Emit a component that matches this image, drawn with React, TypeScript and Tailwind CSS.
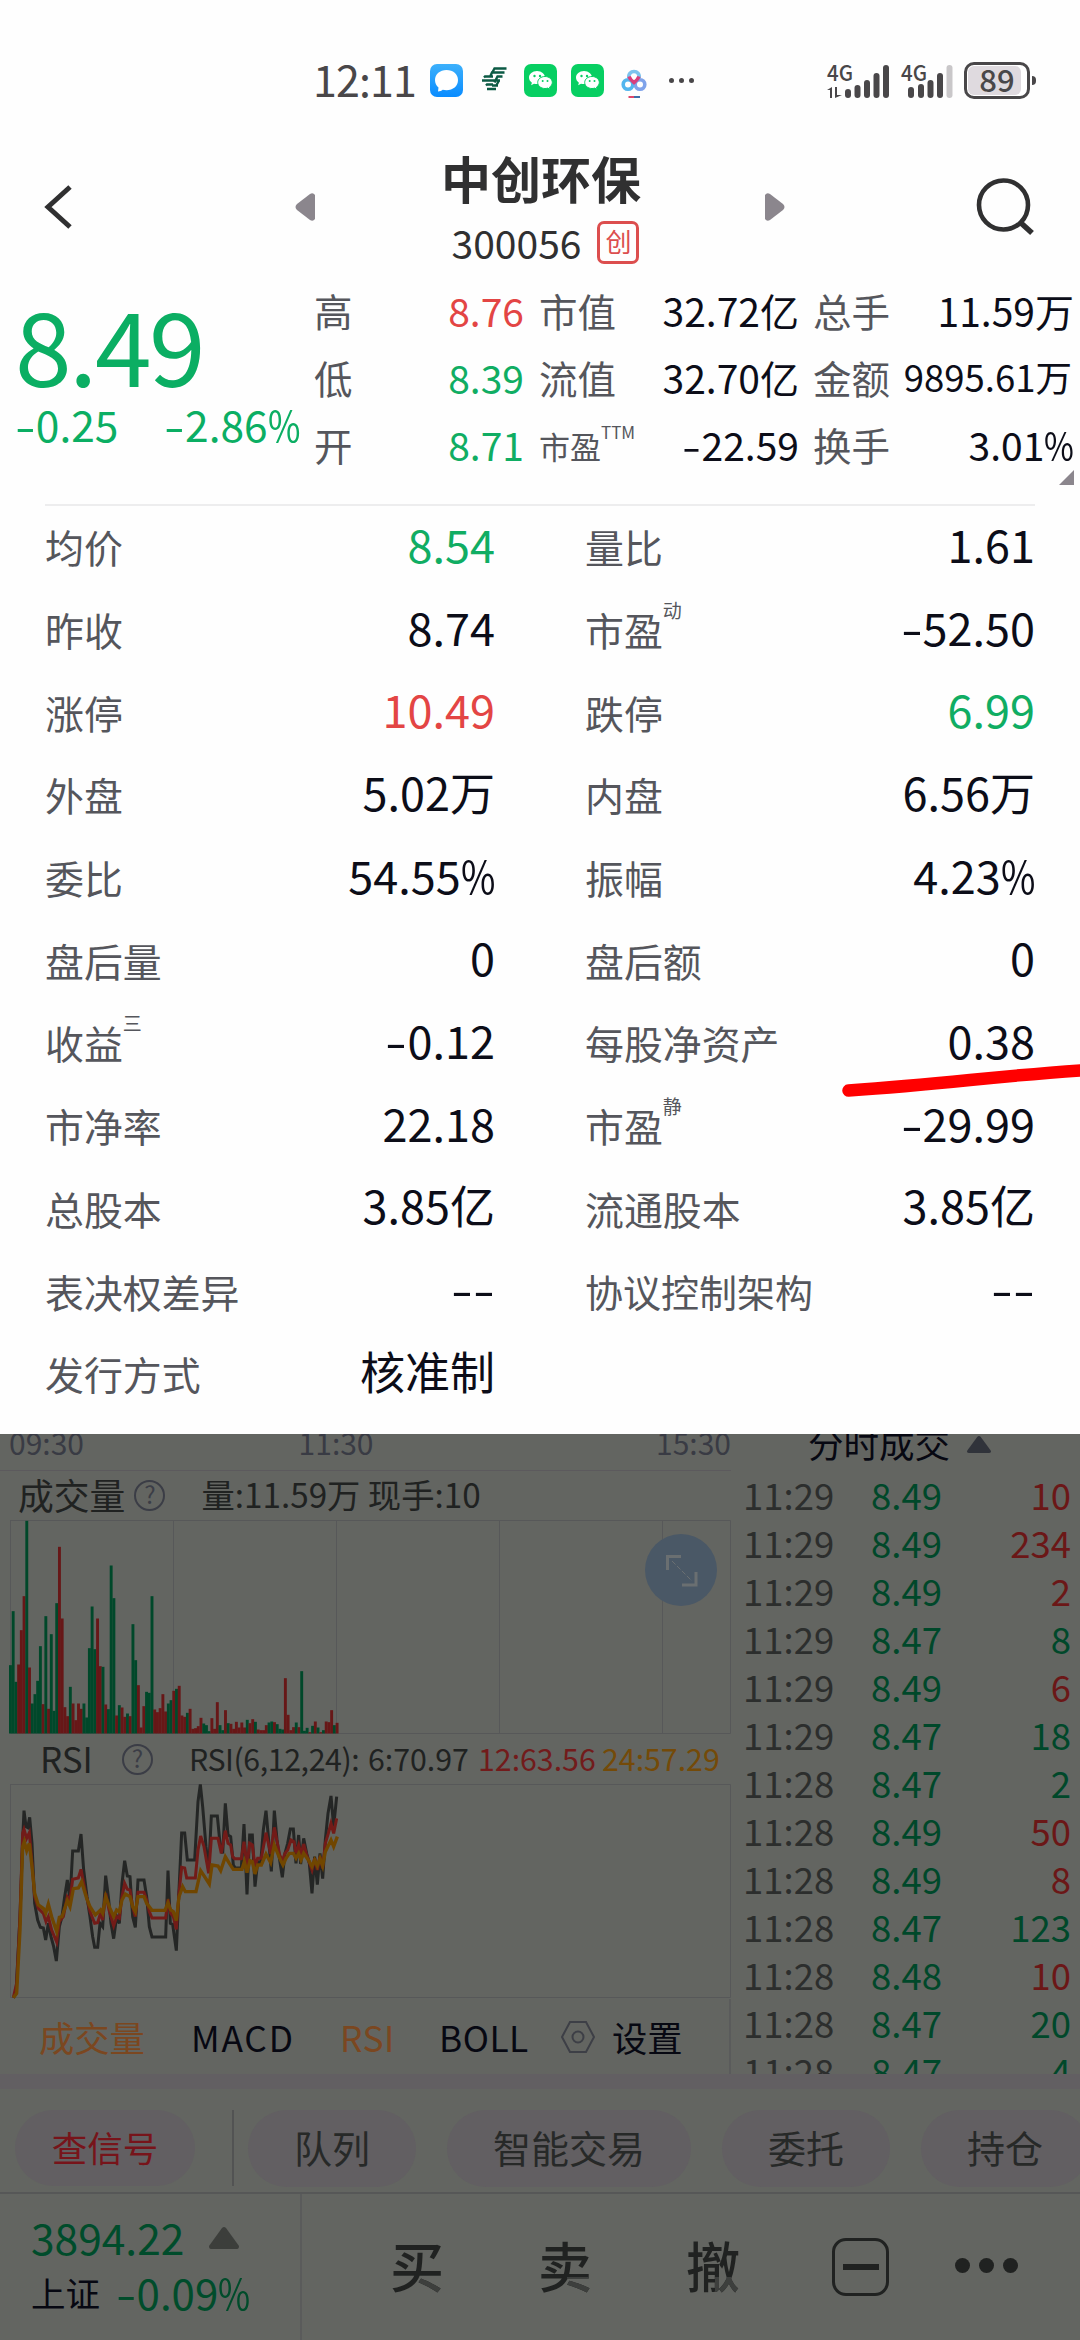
import type { ReactNode } from "react";
import { clsx } from "clsx";

type Tone = "up" | "down" | "ink";

const toneClass: Record<Tone, string> = {
  up: "text-[#e34544]",
  down: "text-[#10ad63]",
  ink: "text-[#0c0d18]",
};

type Cell = { label: string; sup?: string; value: string; tone?: Tone };

const details: Cell[] = [
  { label: "均价", value: "8.54", tone: "down" },
  { label: "量比", value: "1.61" },
  { label: "昨收", value: "8.74" },
  { label: "市盈", sup: "动", value: "-52.50" },
  { label: "涨停", value: "10.49", tone: "up" },
  { label: "跌停", value: "6.99", tone: "down" },
  { label: "外盘", value: "5.02万" },
  { label: "内盘", value: "6.56万" },
  { label: "委比", value: "54.55%" },
  { label: "振幅", value: "4.23%" },
  { label: "盘后量", value: "0" },
  { label: "盘后额", value: "0" },
  { label: "收益", sup: "三", value: "-0.12" },
  { label: "每股净资产", value: "0.38" },
  { label: "市净率", value: "22.18" },
  { label: "市盈", sup: "静", value: "-29.99" },
  { label: "总股本", value: "3.85亿" },
  { label: "流通股本", value: "3.85亿" },
  { label: "表决权差异", value: "--" },
  { label: "协议控制架构", value: "--" },
  { label: "发行方式", value: "核准制" },
];

const trades: [string, string, string, Tone][] = [
  ["11:29", "8.49", "10", "up"],
  ["11:29", "8.49", "234", "up"],
  ["11:29", "8.49", "2", "up"],
  ["11:29", "8.47", "8", "down"],
  ["11:29", "8.49", "6", "up"],
  ["11:29", "8.47", "18", "down"],
  ["11:28", "8.47", "2", "down"],
  ["11:28", "8.49", "50", "up"],
  ["11:28", "8.49", "8", "up"],
  ["11:28", "8.47", "123", "down"],
  ["11:28", "8.48", "10", "up"],
  ["11:28", "8.47", "20", "down"],
  ["11:28", "8.47", "4", "down"],
];

// one entry per minute, g = falling, r = rising
const volume =
  "g205 g367 g155 r207 r310 r412 g638 r198 g90 g118 g158 g262 r88 g352 r74 g298 g68 g391 r560 r345 r79 r52 g140 r90 r40 r90 r74 g90 g48 g256 g381 g253 r345 r202 g200 r87 g73 g504 g406 r54 g85 r78 r50 g60 r52 g328 g220 r145 r18 r82 g125 g122 g412 r72 r64 r76 r118 r66 g90 g100 r128 g134 r143 r54 r50 g62 r74 r14 r16 r22 r47 g30 g25 g7 r46 r14 r94 g25 g10 r70 g31 r29 r14 r35 r18 r33 r18 g41 r31 r43 g35 r12 r10 r10 r25 g33 g36 r34 g28 g14 g12 r166 r56 r10 r19 g33 r19 g187 g8 g17 r4 g23 r36 g18 r4 g10 r36 r34 r70 g25 r32".split(
    " ",
  );

const rsi6 =
  "40,803 48,790 60,560 68,330 72,242 78,290 83,293 89,262 96,340 104,520 113,570 121,592 130,594 137,630 145,580 153,620 161,650 169,693 178,590 186,560 194,500 202,450 210,510 218,363 235,363 243,312 251,420 261,500 270,560 278,620 284,652 293,652 300,580 308,590 317,437 325,500 333,580 341,626 350,560 358,580 366,460 374,392 382,438 390,440 398,560 406,592 414,450 432,450 440,500 448,590 456,621 497,621 504,422 511,580 518,583 529,662 537,480 545,309 554,309 562,390 584,390 594,215 601,163 608,230 618,350 626,420 634,258 652,258 660,340 668,370 676,220 684,315 692,320 700,405 706,414 724,414 732,282 741,493 749,315 757,315 765,470 773,395 782,400 790,300 798,242 806,330 814,424 823,242 831,330 839,390 847,442 855,370 863,340 871,297 880,297 888,400 896,315 902,402 911,325 920,370 928,400 936,490 944,380 952,464 960,370 968,446 976,330 984,250 993,198 1001,290 1010,200";
const rsi12 =
  "40,803 50,760 60,560 68,310 72,298 80,325 88,308 96,400 104,500 115,535 130,550 138,575 145,560 155,600 170,636 178,575 190,560 202,500 210,510 218,448 235,444 243,418 255,480 270,545 284,580 293,578 302,548 308,570 317,490 327,540 341,588 350,560 358,565 366,500 374,460 382,478 390,480 398,530 406,560 414,487 432,487 440,510 448,545 456,564 497,564 504,508 512,550 520,560 529,598 537,490 545,412 554,414 560,444 586,444 594,360 602,318 612,350 626,430 634,325 654,325 664,370 676,302 684,340 692,345 698,380 704,386 724,386 732,335 741,408 749,340 757,345 765,408 773,385 784,385 798,308 812,372 823,292 839,375 847,392 855,370 863,360 873,330 882,335 888,370 896,345 903,375 911,342 920,375 936,420 944,385 952,420 960,380 968,415 976,340 985,310 993,280 1001,310 1010,265";
const rsi24 =
  "40,803 50,790 60,600 68,350 73,335 80,362 88,340 96,410 104,490 115,525 130,535 137,550 145,522 155,560 170,605 178,562 186,560 202,512 210,530 220,476 235,474 245,455 260,505 270,530 286,555 302,540 308,550 317,500 330,535 341,560 350,540 358,545 366,510 376,492 390,500 398,530 406,545 414,500 432,500 440,520 456,541 495,541 504,518 512,540 520,545 529,572 537,500 548,470 556,485 588,485 602,422 628,462 636,405 654,408 662,422 676,380 688,400 700,418 726,418 733,395 741,428 750,392 757,395 765,432 773,405 784,405 798,372 812,398 823,345 839,385 849,405 858,385 868,370 880,370 888,385 896,370 903,390 911,370 925,390 936,410 944,390 952,408 960,385 968,408 976,365 993,330 1001,350 1012,320";

// the number face has a wide dash and a narrow percent sign
function Num({ children }: { children: string }) {
  return (
    <>
      {children.split("").map((ch, i) => {
        if (ch === "-") return <span key={i} className="inline-block w-[0.49em] scale-x-140 text-center">-</span>;
        if (ch === "%") return <span key={i} className="inline-block w-[0.76em] scale-x-[.83] origin-left">%</span>;
        return ch;
      })}
    </>
  );
}

function WeChat() {
  return (
    <svg viewBox="0 0 33 33" className="w-[33px] h-[33px]">
      <rect width="33" height="33" rx="7" fill="#07cf62" />
      <path d="M13 7c-4.600 0-8 3-8 6.600 0 2.100 1.100 3.900 2.900 5.100l-.8 2.500 2.900-1.500c.9.300 1.900.4 3 .4 4.600 0 8-2.900 8-6.500S17.600 7 13 7z" fill="#fff" />
      <path d="M21 12.500c-4.200 0-7.300 2.700-7.300 6s3.100 6 7.300 6c1 0 1.800-.1 2.600-.4l2.500 1.300-.6-2.200c1.700-1.100 2.800-2.800 2.800-4.700 0-3.300-3.100-6-7.300-6z" fill="#fff" stroke="#07cf62" strokeWidth="1" />
      <g fill="#07cf62">
        <circle cx="10.500" cy="12" r="1.200" />
        <circle cx="16" cy="12" r="1.200" />
        <circle cx="18.700" cy="17" r="1" />
        <circle cx="23.500" cy="17" r="1" />
      </g>
    </svg>
  );
}

function Signal({ roaming }: { roaming?: boolean }) {
  return (
    <svg viewBox="0 0 64 38" className="w-[64px] h-[38px] overflow-visible" fill="#494749">
      <text x="0" y="19" fontSize="22" fontWeight="500" textLength="26" lengthAdjust="spacingAndGlyphs">
        4G
      </text>
      {roaming ? (
        <>
          <rect x="7" y="25" width="6" height="11" rx="3" />
          <rect x="17" y="22" width="6" height="14" rx="3" />
          <rect x="26.500" y="18" width="6" height="18" rx="3" />
          <rect x="36" y="11" width="6" height="25" rx="3" />
          <rect x="45.500" y="3" width="6" height="33" rx="3" fill="#c9c7c9" />
        </>
      ) : (
        <>
          <path d="M0 28l5-3v11H3v-8zM8 25h2v8h5l-7 3z" />
          <rect x="18" y="27" width="6" height="9" rx="3" />
          <rect x="27.500" y="23" width="6" height="13" rx="3" />
          <rect x="37" y="18" width="6" height="18" rx="3" />
          <rect x="46.500" y="11" width="6" height="25" rx="3" />
          <rect x="56" y="3" width="6" height="33" rx="3" />
        </>
      )}
    </svg>
  );
}

function StatusBar() {
  return (
    <div className="h-[110px] pt-[51px] pl-[313px] flex items-center text-[#494749]">
      <span className="w-[117px] text-[43px] leading-[54px] -mt-[6px] tracking-[-0.900px]">12:11</span>
      <svg viewBox="0 0 33 33" className="w-[33px] h-[33px]">
        <defs>
          <linearGradient id="msg" x2="0" y2="1">
            <stop stopColor="#3cb0fb" />
            <stop offset="1" stopColor="#0a8cff" />
          </linearGradient>
        </defs>
        <rect width="33" height="33" rx="7" fill="url(#msg)" />
        <path d="M16.500 6C10 6 5 10.300 5 16c0 3 1.300 5.700 3.500 7.500L8 27.500c2 0 3.500-.6 4.700-1.700 1.200.3 2.500.5 3.800.5C23 26.300 28 22 28 16S23 6 16.500 6z" fill="#fff" />
      </svg>
      <svg viewBox="0 0 26 24" className="w-[26px] h-[24px] ml-[18px] -mt-[3px]" fill="none" stroke="#0b5a44" strokeWidth="2.400">
        <path d="M25.500 1.500H13.500L11 6M23.500 5.500H11L9 10M21.500 9.500h-5l-3 6M12 9.500H4l-1 1M19 13.500H1M18 13.500l-3 5.500M12 17.500H6l-1 1M17 18.500h-6M15 22H6" />
      </svg>
      <div className="flex gap-[14px] ml-[17px]">
        <WeChat />
        <WeChat />
      </div>
      <svg viewBox="0 0 32 34" className="w-[32px] h-[34px] ml-[14px]" fill="none" strokeWidth="3.600">
        <circle cx="10" cy="20.500" r="4.800" stroke="#52b6ee" />
        <circle cx="22" cy="20.500" r="4.800" stroke="#7fa3ea" />
        <path d="M11 14c-1-4 2-6.500 5-6.500s6 2.500 5 6.500" stroke="#7cc3ee" />
        <path d="M11 12.500q1 3 5 6 4-3 5-6" stroke="#d83f7c" />
        <path d="M10.500 33h6" stroke="#e0476a" strokeWidth="2" />
        <path d="M16 33h6" stroke="#3f6fa8" strokeWidth="2" />
      </svg>
      <div className="flex gap-[5px] ml-[19px]">
        <i className="size-[5px] rounded-full bg-current" />
        <i className="size-[5px] rounded-full bg-current" />
        <i className="size-[5px] rounded-full bg-current" />
      </div>
      <div className="ml-[133px]">
        <Signal />
      </div>
      <div className="ml-[10px]">
        <Signal roaming />
      </div>
      <div className="-ml-[1px] w-[66px] h-[37px] rounded-[10px] border-[3px] border-[#494749] bg-white p-[1px] flex">
        <div className="w-[53px] bg-[#dfdadf] rounded-[6px] flex items-center justify-center pl-[5px] text-[31px] leading-[27px] font-medium">
          <span className="-mt-[5px]">89</span>
        </div>
      </div>
      <i className="ml-[2px] w-[4px] h-[9px] rounded-r bg-[#494749]" />
    </div>
  );
}

function Header() {
  return (
    <header className="h-[166px] flex items-start pl-[44px] text-[#303031]">
      <svg viewBox="0 0 28 44" className="w-[28px] h-[44px] mt-[75px]" fill="none" stroke="currentColor" strokeWidth="5">
        <path d="M26 2L4 22l22 20" />
      </svg>
      <svg viewBox="0 0 20 28" className="w-[20px] h-[28px] mt-[83px] ml-[223px]" fill="#8b868d">
        <path d="M20 2v24q-2 3-5 1L2 17q-3-3 0-6L15 1q3-2 5 1z" />
      </svg>
      <div className="w-[450px] pt-[37px] flex flex-col items-center">
        <h1 className="text-[50px] leading-[60px] font-bold pl-[2px]">中创环保</h1>
        <div className="h-[42px] mt-[14px] pl-[11px] flex items-center gap-[16px]">
          <span className="text-[39px] leading-[42px]">300056</span>
          <span className="w-[42px] h-[43px] rounded-[7px] border-[3px] border-[#dc4e4e] text-[#dc4e4e] text-[26px] leading-[34px] text-center">创</span>
        </div>
      </div>
      <svg viewBox="0 0 20 28" className="w-[20px] h-[28px] mt-[83px]" fill="#8b868d">
        <path d="M0 2v24q2 3 5 1l13-10q3-3 0-6L5 1Q2-1 0 2z" />
      </svg>
      <svg viewBox="0 0 62 62" className="w-[62px] h-[62px] mt-[66px] ml-[190px]" fill="none" stroke="currentColor" strokeWidth="4.600">
        <circle cx="28.500" cy="29" r="24.500" />
        <path d="M46 47l11 10" strokeWidth="5.500" />
      </svg>
    </header>
  );
}

function QuoteRow({ label, value, tone = "ink", tight }: { label: ReactNode; value: string; tone?: Tone; tight?: boolean }) {
  return (
    <div className="h-[67px] flex items-center justify-between whitespace-nowrap">
      <span className="text-[38.500px] text-[#55565c]">{label}</span>
      <span className={clsx(toneClass[tone], tight ? "text-[36.500px] pr-[2px]" : "text-[39px]")}>
        <Num>{value}</Num>
      </span>
    </div>
  );
}

function Quote() {
  return (
    <section className="h-[228px] flex leading-[60px]">
      <div className="w-[314px] pl-[15px] text-[#0bae63]">
        <div className="mt-[16px] text-[102px] leading-[102px] tracking-[-2.500px]">8.49</div>
        <div className="flex w-[285px] justify-between text-[42.500px] leading-[60px]">
          <span><Num>-0.25</Num></span>
          <span><Num>-2.86%</Num></span>
        </div>
      </div>
      <div className="w-[210px]">
        <QuoteRow label="高" value="8.76" tone="up" />
        <QuoteRow label="低" value="8.39" tone="down" />
        <QuoteRow label="开" value="8.71" tone="down" />
      </div>
      <div className="w-[260px] ml-[15px]">
        <QuoteRow label="市值" value="32.72亿" />
        <QuoteRow label="流值" value="32.70亿" />
        <QuoteRow
          label={
            <span className="text-[31px]">
              市盈<span className="inline-block align-top text-[17px] leading-none pt-[11px]">TTM</span>
            </span>
          }
          value="-22.59"
        />
      </div>
      <div className="w-[261px] ml-[14px] flex flex-col">
        <QuoteRow label="总手" value="11.59万" />
        <QuoteRow label="金额" value="9895.61万" tight />
        <QuoteRow label="换手" value="3.01%" />
        <svg viewBox="0 0 15 15" className="self-end size-[15px] -mt-[7px]" fill="#8b868d">
          <path d="M15 0v15H0z" />
        </svg>
      </div>
    </section>
  );
}

function Details() {
  return (
    <section className="h-[929px] -mt-[1px] px-[45px] grid grid-cols-2 auto-rows-[82.700px] content-start">
      {details.map((d, i) => (
        <div key={i} className="flex items-center justify-between odd:pr-[45px] even:pl-[45px] leading-[60px]">
          <span className={clsx("text-[#55565c]", d.label.length > 5 ? "text-[38px]" : "text-[38.900px]")}>
            {d.label}
            {d.sup && <span className="inline-block align-top text-[19px] leading-none pt-[1px]">{d.sup}</span>}
          </span>
          <span className={clsx("text-[45px] pb-[5px]", toneClass[d.tone ?? "ink"])}>
            <Num>{d.value}</Num>
          </span>
        </div>
      ))}
    </section>
  );
}

function Help() {
  return (
    <span className="size-[31px] rounded-full border-[2px] border-[#3b3d46] text-[#3b3d46] text-[24px] leading-[24px] text-center">?</span>
  );
}

function VolumeChart() {
  return (
    <div className="relative h-[214px]">
      <svg viewBox="0 0 731 214" className="w-[731px] h-[214px]" fill="none">
        <path d="M10.500 0V213.500H730.500V.5H10.500M173.500 0V213M336.500 0V213M499.500 0V213M662.500 0V213" stroke="#575859" />
        {volume.map((v, i) => {
          const h = Number(v.slice(1)) / 3;
          return <rect key={i} x={9 + i * 2.722} y={213.500 - h} width="2.900" height={h} fill={v[0] === "g" ? "#00482a" : "#671717"} />;
        })}
      </svg>
      <div className="absolute left-[645px] top-[14px] size-[72px] rounded-full bg-[#4a5866]">
        <svg viewBox="0 0 72 72" fill="none" stroke="#6a6f71" strokeWidth="3">
          <path d="M22.500 36V22.500H36M37 51h14V38" />
          <path d="M27 27l20 20" strokeWidth="1" strokeDasharray="5 2" />
        </svg>
      </div>
    </div>
  );
}

function RsiChart() {
  return (
    <svg viewBox="0 0 731 215" className="w-[731px] h-[215px] block" fill="none">
      <path d="M10.500 0V213.500H730.500V.5H10.500" stroke="#575859" />
      <g transform="scale(.33333) translate(0 -162)" strokeWidth="9">
        <polyline points={rsi6} stroke="#242625" />
        <polyline points={rsi12} stroke="#721b18" />
        <polyline points={rsi24} stroke="#704600" strokeWidth="10" />
      </g>
    </svg>
  );
}

function Charts() {
  return (
    <div className="w-[731px] h-[640px] shrink-0 flex flex-col text-[#202221] whitespace-nowrap">
      <div className="h-[37px] pl-[9px] flex overflow-hidden border-b border-[#5c5a5d] text-[#393b44] text-[30px] leading-[17px]">
        <span className="w-[290px]">09:30</span>
        <span className="w-[358px]">11:30</span>
        <span>15:30</span>
      </div>
      <div className="h-[49px] pl-[18px] flex items-center leading-[40px]">
        <span className="text-[35.800px] -mt-[4px] mr-[9px]">成交量</span>
        <Help />
        <span className="text-[33.300px] -mt-[3px] ml-[36px]">量:11.59万 现手:10</span>
      </div>
      <VolumeChart />
      <div className="h-[50px] pl-[40px] flex items-center leading-[40px] text-[30.300px]">
        <span className="text-[35px] -mt-[2px] w-[82px]">RSI</span>
        <Help />
        <span className="ml-[36px] -mt-[3px] w-[179px] tracking-[-0.400px]">RSI(6,12,24):</span>
        <span className="-mt-[3px] w-[110px]">6:70.97</span>
        <span className="-mt-[3px] w-[124px] text-[#721b1b]">12:63.56</span>
        <span className="-mt-[3px] text-[#744a08]">24:57.29</span>
      </div>
      <RsiChart />
      <div className="h-[75px] pl-[39px] flex items-center border-r-2 border-[#5a5b5b] text-[35.300px] leading-[38px] text-[#070812]">
        <span className="w-[152px] text-[#7b4720]">成交量</span>
        <span className="w-[149px] tracking-[1.800px]">MACD</span>
        <span className="w-[99px] text-[#7b4720] tracking-[0.500px]">RSI</span>
        <span className="w-[121px] tracking-[0.500px]">BOLL</span>
        <svg viewBox="0 0 36 34" className="w-[36px] h-[34px]" fill="none" stroke="#3d3f46" strokeWidth="2">
          <path d="M10 2h16l8 15-8 15H10L2 17z" />
          <circle cx="18" cy="17" r="5.500" />
        </svg>
        <span className="ml-[16px]">设置</span>
      </div>
    </div>
  );
}

function Trades() {
  return (
    <div className="flex-1 h-[640px] overflow-hidden">
      <div className="h-[37px] pl-[77px] flex items-start gap-[15px] text-[#070812] text-[35.500px] leading-[17px]">
        <span>分时成交</span>
        <svg viewBox="0 0 28 20" className="w-[28px] h-[18px] mt-[2px]" fill="#30333a">
          <path d="M12 1q2-2 4 0l11 15q1 3-2 3H3q-3 0-2-3z" />
        </svg>
      </div>
      {trades.map(([time, price, lots, tone], i) => (
        <div key={i} className="h-[48px] pl-[12px] pr-[9px] flex leading-[48px] text-[36.500px]">
          <span className="w-[128px] text-[#2c2e2d]">{time}</span>
          <span className="flex-1 text-[#00482a]">{price}</span>
          <span className={tone === "up" ? "text-[#6b1717]" : "text-[#00482a]"}>{lots}</span>
        </div>
      ))}
    </div>
  );
}

function Shortcuts() {
  return (
    <div className="h-[103px] pl-[15px] pt-[21px] flex items-start overflow-hidden whitespace-nowrap text-[38px] leading-[73px] text-center text-[#272928]">
      <span className="shrink-0 w-[180px] h-[76px] rounded-full bg-[#625f62] text-[#77141a] text-[35.500px]">查信号</span>
      <i className="shrink-0 w-[2px] h-[76px] ml-[37px] bg-[#525353]" />
      <span className="shrink-0 w-[168px] h-[77px] ml-[14px] rounded-full bg-[#625f62]">队列</span>
      <span className="shrink-0 w-[244px] h-[77px] ml-[31px] rounded-full bg-[#625f62]">智能交易</span>
      <span className="shrink-0 w-[168px] h-[77px] ml-[31px] rounded-full bg-[#625f62]">委托</span>
      <span className="shrink-0 w-[168px] h-[77px] ml-[31px] rounded-full bg-[#625f62]">持仓</span>
    </div>
  );
}

// large action glyph with its last stroke in a lighter tone
function Action({ children }: { children: string }) {
  return (
    <span className="w-[148px] text-center text-[54px] leading-[70px] font-medium">
      <span className="bg-clip-text text-transparent bg-no-repeat [background-image:linear-gradient(#3d3f3d,#3d3f3d),linear-gradient(#202221,#202221)] [background-size:46%_34%,100%_100%] [background-position:100%_100%,0_0]">
        {children}
      </span>
    </span>
  );
}

function BottomBar() {
  return (
    <div className="h-[148px] flex border-t-2 border-[#565757] text-[#202221]">
      <div className="w-[302px] pl-[31px] pt-[15px] border-r-2 border-[#5a5b5b]">
        <div className="flex items-center text-[42.500px] leading-[56px] text-[#004c2b]">
          3894.22
          <svg viewBox="0 0 30 22" className="w-[30px] h-[22px] ml-[25px] mt-[2px]" fill="#3c3e3b">
            <path d="M13 1q2-2 4 0l13 18q0 3-2 3H2q-2 0-2-3z" />
          </svg>
        </div>
        <div className="flex items-center leading-[54px]">
          <span className="text-[34.500px] text-[#070812]">上证</span>
          <span className="ml-[16px] text-[42px] text-[#004c2b]"><Num>-0.09%</Num></span>
        </div>
      </div>
      <div className="pl-[41px] pt-[36px] flex">
        <Action>买</Action>
        <Action>卖</Action>
        <Action>撤</Action>
      </div>
      <div className="mt-[44px] ml-[45px] w-[57px] h-[58px] rounded-[14px] border-[3px] border-[#202221] flex items-center justify-center">
        <i className="w-[36px] h-[6px] bg-[#202221]" />
      </div>
      <div className="ml-[66px] mt-[64px] flex gap-[9px]">
        <i className="size-[15px] rounded-full bg-[#202221]" />
        <i className="size-[15px] rounded-full bg-[#202221]" />
        <i className="size-[15px] rounded-full bg-[#202221]" />
      </div>
    </div>
  );
}

export default function App() {
  return (
    <div className="relative w-[1080px] h-[2340px] overflow-hidden bg-[#fefefe] flex flex-col font-['Noto_Sans_CJK_SC',sans-serif]">
      <StatusBar />
      <Header />
      <Quote />
      <div className="h-[2px] mx-[45px] bg-[#ededee]" />
      <Details />
      <div className="h-[906px] bg-[#636561]">
        <div className="flex">
          <Charts />
          <Trades />
        </div>
        <div className="h-[15px] bg-[#625f62]" />
        <Shortcuts />
        <BottomBar />
      </div>
      {/* marker stroke under 每股净资产 */}
      <svg viewBox="0 0 240 40" className="absolute left-[840px] top-[1060px] w-[240px] h-[40px]" fill="none">
        <path d="M8.500 30.500Q60 27 130 20T246 10" stroke="#ff0000" strokeWidth="12.500" strokeLinecap="round" />
      </svg>
    </div>
  );
}
